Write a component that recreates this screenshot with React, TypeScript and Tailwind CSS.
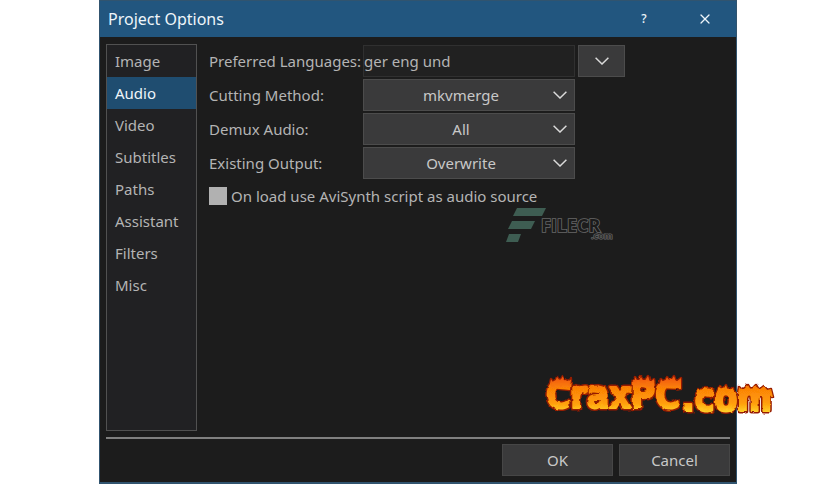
import { useState } from "react";
import { X } from "lucide-react";

const pages = ["Image", "Audio", "Video", "Subtitles", "Paths", "Assistant", "Filters", "Misc"];

const settings = [
  { id: "cutting", label: "Cutting Method:", options: ["mkvmerge", "NicAudio", "Nothing"] },
  { id: "demux", label: "Demux Audio:", options: ["All", "Preferred", "Dialog", "None"] },
  { id: "existing", label: "Existing Output:", options: ["Overwrite", "Skip", "Ask"] },
];

function Chevron() {
  return (
    <svg viewBox="0 0 14 8" className="h-2 w-3.5" fill="none" stroke="#dadada" strokeWidth="1.5" aria-hidden="true">
      <path d="M0.6 0.8L7 7l6.400-6.200" />
    </svg>
  );
}

function FileLogo() {
  return (
    <svg viewBox="0 0 110 38" className="h-[38px] w-[110px]" role="img" aria-label="FILECR.com">
      <g fill="#3e5d52">
        <path d="M11 1h29l-4 8H7z" />
        <path d="M6 14h23l-4 8H2z" />
        <path d="M3 27h12l-3 8H0z" />
      </g>
      <g className="font-['Open_Sans',sans-serif] font-bold" paintOrder="stroke">
        <text x="35" y="25" fontSize="18" fill="#1b1b1b" stroke="#686868" strokeWidth="1.6">FILECR</text>
        <text x="85" y="32" fontSize="9" fill="#303030" stroke="#686868" strokeWidth="1.2">.com</text>
      </g>
    </svg>
  );
}

function FlameLogo() {
  const flames = (
    <>
      <path d="M6 16l2-9 3 5 3-7 3 4 3-5 3 6 5-3-1 11z" />
      <path d="M32 20l1-7 3 4 3-3 2 4 4-3-2 7z" />
      <path d="M47 20l2-7 3 4 3-4 3 4 4-3 1 8z" />
      <path d="M68 20l1-6 4 4 2-2 2 5zM81 20l1-5 3 2 4-3-1 7z" />
      <path d="M91 14l1-9 3 5 3-5 3 5 4-6 2 6 4-3 1 10z" />
      <path d="M116 16l2-9 3 4 3-6 3 5 4-6 2 6 5-4v11z" />
      <path d="M152 23l3-7 3 4 3-5 2 5 5-3v8z" />
      <path d="M173 22l3-7 3 4 4-6 2 6 5-3 1 8z" />
      <path d="M195 22l1-8 4 4 5-5 3 5 5-5 3 5 5-4 3 4 4-1 2 8z" />
    </>
  );
  const words = (
    <>
      <text x="3" y="36" fontSize="37">CraxPC</text>
      <text x="139" y="39" fontSize="37">.com</text>
    </>
  );

  return (
    <svg viewBox="0 0 236 48" className="h-[48px] w-[236px]" role="img" aria-label="CraxPC.com">
      <defs>
        <linearGradient id="fire" gradientUnits="userSpaceOnUse" x1="0" y1="4" x2="0" y2="40">
          <stop offset="0" stopColor="#f0520c" />
          <stop offset="0.35" stopColor="#fb8306" />
          <stop offset="0.75" stopColor="#ff9d08" />
          <stop offset="1" stopColor="#ffd02a" />
        </linearGradient>
        <filter id="rough" x="-5%" y="-20%" width="110%" height="140%">
          <feTurbulence type="fractalNoise" baseFrequency="0.16" numOctaves="2" seed="4" />
          <feDisplacementMap in="SourceGraphic" scale="3" xChannelSelector="R" yChannelSelector="G" />
        </filter>
      </defs>
      <g
        filter="url(#rough)"
        strokeLinejoin="round"
        className="font-['DejaVu_Sans_Condensed','DejaVu_Sans',sans-serif] font-bold [font-stretch:condensed]"
      >
        <g fill="#971d04" stroke="#971d04" strokeWidth="5">
          {words}
          <g strokeWidth="2.500">{flames}</g>
        </g>
        <g fill="url(#fire)" stroke="url(#fire)" strokeWidth="2">
          {words}
          <g stroke="none">{flames}</g>
        </g>
      </g>
    </svg>
  );
}

export default function App() {
  const [page, setPage] = useState("Audio");

  return (
    <div className="min-h-screen bg-white font-['Noto_Sans','Open_Sans',sans-serif] text-[15px] text-[#b4b4b4]">
      <main className="relative mx-auto flex min-h-screen w-full max-w-[638px] flex-col border border-b-2 border-[#31546f] bg-[#1c1c1c]">
        <header className="flex h-9 shrink-0 items-center bg-[#22567f] pl-2 text-[#eef5fa]">
          <h1 className="grow text-base">Project Options</h1>
          <button aria-label="Help" className="flex h-9 w-[60px] items-center justify-center text-xs font-medium">
            ?
          </button>
          <button aria-label="Close" className="flex h-9 w-[62px] items-center justify-center">
            <X size={16} strokeWidth={1.8} />
          </button>
        </header>

        <div className="flex grow gap-3 px-1.5 pt-[7px] pb-1.5">
          <nav className="w-[91px] shrink-0 border border-[#515151] bg-[#212123]">
            {pages.map((name) => (
              <button
                key={name}
                onClick={() => setPage(name)}
                aria-current={name === page ? "page" : undefined}
                className={`block h-8 w-full pl-2 text-left ${
                  name === page ? "bg-[#1f4d70] text-[#eef5fa]" : ""
                }`}
              >
                {name}
              </button>
            ))}
          </nav>

          <div className="flex min-w-0 grow flex-col gap-0.5 pt-px">
            <div className="flex h-8 items-center">
              <label htmlFor="languages" className="w-[154px] shrink-0 whitespace-nowrap">
                Preferred Languages:
              </label>
              <input
                id="languages"
                defaultValue="ger eng und"
                className="h-8 w-53 min-w-0 border border-[#303030] bg-[#212121] outline-none"
              />
              <button
                aria-label="Choose languages"
                className="ml-[3px] flex h-8 w-[47px] items-center justify-center border border-[#4c4c4c] bg-[#3a3a3b]"
              >
                <Chevron />
              </button>
            </div>

            {settings.map(({ id, label, options }) => (
              <div key={id} className="flex h-8 items-center">
                <label htmlFor={id} className="w-[154px] shrink-0">
                  {label}
                </label>
                <div className="relative w-53">
                  <select
                    id={id}
                    className="block h-8 w-full appearance-none border border-[#4c4c4c] bg-[#3a3a3b] pr-4 text-center text-[#c8c8c8] [text-align-last:center]"
                  >
                    {options.map((option) => (
                      <option key={option}>{option}</option>
                    ))}
                  </select>
                  <div className="pointer-events-none absolute top-3 right-2">
                    <Chevron />
                  </div>
                </div>
              </div>
            ))}

            <div className="flex h-[30px] items-center gap-1">
              <input
                id="avisynth"
                type="checkbox"
                className="size-[18px] appearance-none bg-[#b1b1b1] checked:bg-[#22567f]"
              />
              <label htmlFor="avisynth">On load use AviSynth script as audio source</label>
            </div>
          </div>
        </div>

        <footer className="mx-1.5 flex shrink-0 justify-end gap-1.5 border-t-2 border-[#808080] pt-[5px] pb-1.5">
          {["OK", "Cancel"].map((name) => (
            <button
              key={name}
              className="h-8 w-[111px] border border-[#464646] bg-[#3a3a3b] text-[#c8c8c8]"
            >
              {name}
            </button>
          ))}
        </footer>

        <div className="pointer-events-none absolute top-[206px] left-[406px]">
          <FileLogo />
        </div>
        <div className="pointer-events-none absolute top-[371px] left-[443px]">
          <FlameLogo />
        </div>
      </main>
    </div>
  );
}
